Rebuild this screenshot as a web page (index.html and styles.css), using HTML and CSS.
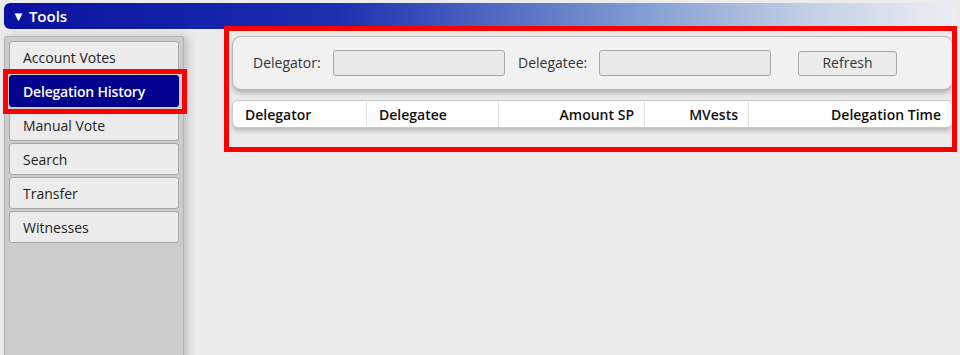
FILE: index.html
```html
<!DOCTYPE html>
<html>
<head>
<meta charset="utf-8">
<link rel="stylesheet" href="styles.css">
</head>
<body>
<div class="page">
  <div class="titlebar"><span class="caret">&#9660;</span><span class="title">Tools</span></div>
  <div class="content">
    <nav class="sidebar">
      <div class="navbtn">Account Votes</div>
      <div class="navbtn selected">Delegation History</div>
      <div class="navbtn">Manual Vote</div>
      <div class="navbtn">Search</div>
      <div class="navbtn">Transfer</div>
      <div class="navbtn">Witnesses</div>
    </nav>
    <main class="main">
      <div class="filters">
        <label class="lbl">Delegator:</label>
        <div class="input"></div>
        <label class="lbl lbl2">Delegatee:</label>
        <div class="input"></div>
        <div class="btn">Refresh</div>
      </div>
      <div class="table">
        <div class="th c1">Delegator</div>
        <div class="th c2">Delegatee</div>
        <div class="th c3 right">Amount SP</div>
        <div class="th c4 right">MVests</div>
        <div class="th c5 right">Delegation Time</div>
      </div>
      <div class="highlight"></div>
    </main>
  </div>
</div>
</body>
</html>
```
FILE: styles.css
```css
html, body {
  margin: 0;
  padding: 0;
  background: #ececec;
  font-family: "Open Sans", "Noto Sans", sans-serif;
  font-size: 14px;
  color: #222;
}
.page {
  width: 960px;
  height: 355px;
  overflow: hidden;
  padding: 3px 0 0 4px;
  box-sizing: border-box;
}
.titlebar {
  width: 950px;
  height: 26px;
  border-radius: 6px;
  background: linear-gradient(to right, #0a10a0 0%, #1a30b0 35%, #7d9ad0 66%, #c4d0e6 85%, #eceef3 100%);
  display: flex;
  align-items: center;
  color: #fff;
  box-sizing: border-box;
  padding-left: 8px;
}
.caret {
  font-size: 13px;
  margin-right: 4px;
  position: relative;
  top: 0;
}
.title {
  font-size: 15px;
  font-weight: 600;
}
.content {
  display: flex;
  margin-top: 7px;
  height: 330px;
}
.sidebar {
  width: 180px;
  box-sizing: border-box;
  background: #cccccc;
  border: 1px solid #b3b3b3;
  border-bottom: none;
  border-radius: 3px 3px 0 0;
  padding: 4px 4px;
  display: flex;
  flex-direction: column;
  gap: 2px;
  box-shadow: 4px 0 8px rgba(0,0,0,0.18);
}
.navbtn {
  height: 32px;
  box-sizing: border-box;
  border: 1px solid #a8a8a8;
  border-radius: 3px;
  background: #ececec;
  padding-left: 13px;
  display: flex;
  align-items: center;
  color: #222;
}
.navbtn.selected {
  background: #00008f;
  color: #fff;
  font-weight: 600;
  letter-spacing: -0.2px;
  border-color: #00008f;
  position: relative;
  z-index: 1;
}
.navbtn.selected::before {
  content: "";
  position: absolute;
  left: -7px;
  top: -7px;
  right: -9px;
  bottom: -8px;
  border: 5px solid #ff0000;
  pointer-events: none;
}
.main {
  position: relative;
  margin-left: 48px;
  width: 721px;
}
.filters {
  height: 54px;
  box-sizing: border-box;
  border: 1px solid #b8b8b8;
  border-radius: 9px;
  background: #f1f1f1;
  box-shadow: 0 3px 5px rgba(0,0,0,0.25);
  display: flex;
  align-items: center;
  padding-left: 20px;
}
.lbl {
  color: #333;
  width: 80px;
  position: relative;
  top: -1px;
}
.lbl2 {
  margin-left: 13px;
  width: 81px;
}
.input {
  width: 172px;
  height: 26px;
  box-sizing: border-box;
  border: 1px solid #a8a8a8;
  border-radius: 3px;
  background: #e9e9e9;
}
.btn {
  margin-left: 27px;
  width: 99px;
  height: 25px;
  box-sizing: border-box;
  border: 1px solid #a8a8a8;
  border-radius: 3px;
  background: #ececec;
  display: flex;
  align-items: center;
  justify-content: center;
  color: #333;
  padding-bottom: 2px;
}
.table {
  margin-top: 10px;
  height: 28px;
  box-sizing: border-box;
  border: 1px solid #c8c8c8;
  border-radius: 6px;
  background: #fff;
  box-shadow: 0 3px 5px rgba(0,0,0,0.22);
  display: grid;
  grid-template-columns: 134px 132px 146px 104px 1fr;
  overflow: hidden;
}
.th {
  font-weight: 600;
  color: #111;
  display: flex;
  align-items: center;
  padding: 0 12px;
  border-right: 1px solid #e2e2e2;
}
.th.c5 { border-right: none; }
.th.right { justify-content: flex-end; padding-right: 10px; }
.th.c5 { padding-right: 11px; }
.highlight {
  position: absolute;
  left: -8px;
  top: -10px;
  width: 733px;
  height: 126px;
  box-sizing: border-box;
  border: 5px solid #ff0000;
  pointer-events: none;
}
```
